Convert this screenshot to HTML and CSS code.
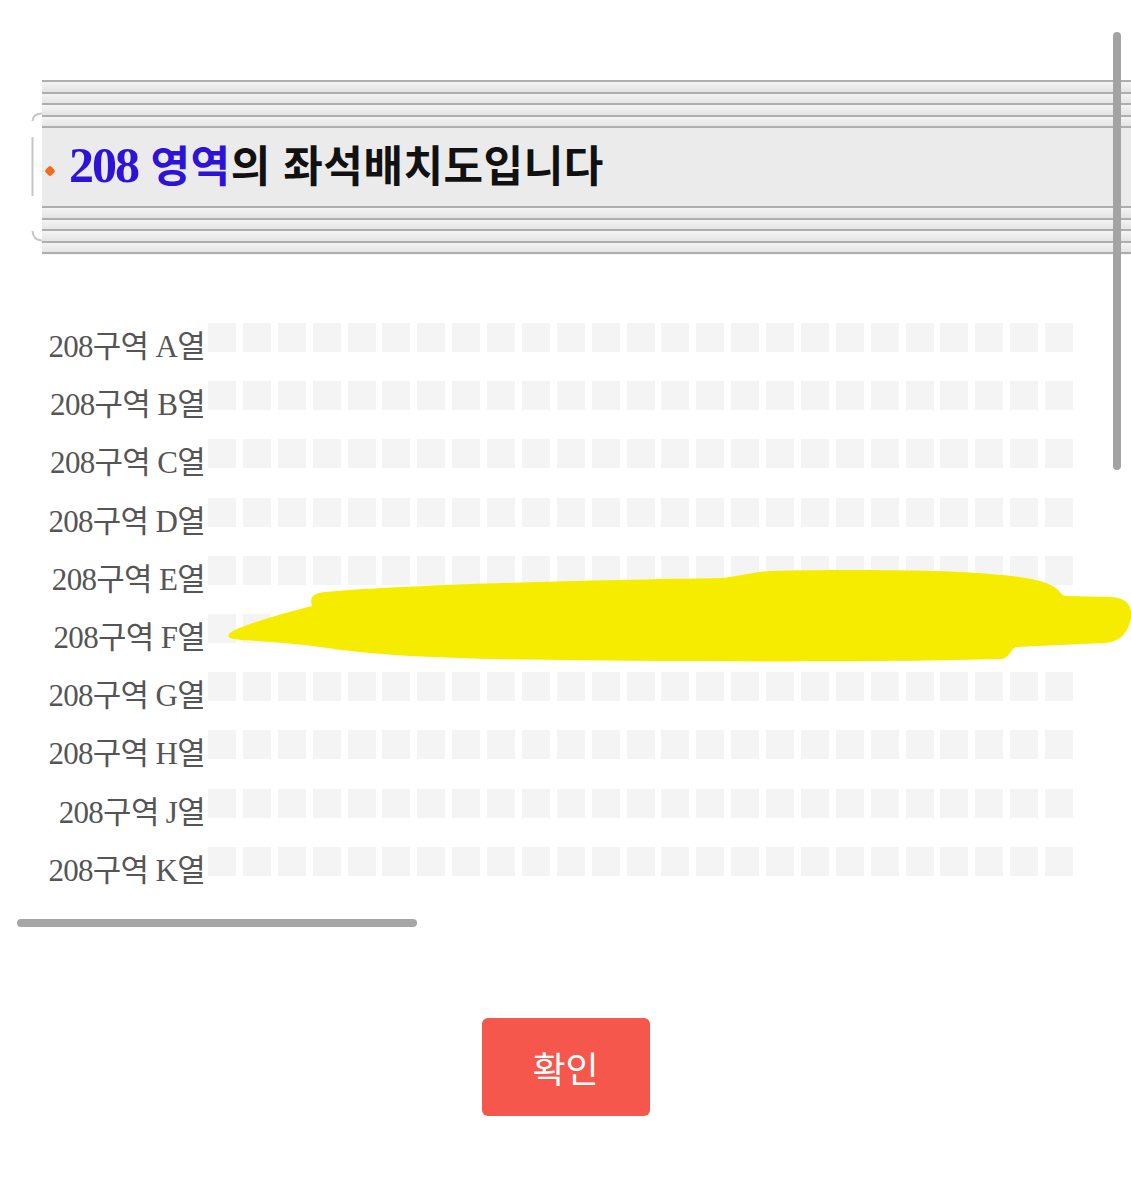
FILE: index.html
```html
<!DOCTYPE html>
<html lang="ko">
<head>
  <meta charset="UTF-8" />
  <meta name="viewport" content="width=device-width, initial-scale=1.0"/>
  <title>208 영역 좌석배치도</title>
  <link rel="stylesheet" href="styles.css">
</head>
<body>

  <div class="title-bar">
    <svg class="bracket" viewBox="0 0 11 175">
      <path d="M11 33.5 Q2 33.5 1.5 41 M1.5 57 V116 M1.5 151 Q2 160 11 160.5" fill="none" stroke="#c6c6c6" stroke-width="2"/>
    </svg>
    <div class="stripes">
      <div class="lines lines-top"></div>
      <div class="panel">
        <h2 class="title"><span class="dot"></span><span class="zone"><span class="num">208</span> 영역</span>의 좌석배치도입니다</h2>
      </div>
      <div class="lines lines-bottom"></div>
    </div>
  </div>

  <div class="seat-map">
    <div class="row"><div class="label">208구역 A열</div><div class="seats"></div></div>
    <div class="row"><div class="label">208구역 B열</div><div class="seats"></div></div>
    <div class="row"><div class="label">208구역 C열</div><div class="seats"></div></div>
    <div class="row"><div class="label">208구역 D열</div><div class="seats"></div></div>
    <div class="row"><div class="label">208구역 E열</div><div class="seats"></div></div>
    <div class="row"><div class="label">208구역 F열</div><div class="seats"></div></div>
    <div class="row"><div class="label">208구역 G열</div><div class="seats"></div></div>
    <div class="row"><div class="label">208구역 H열</div><div class="seats"></div></div>
    <div class="row"><div class="label">208구역 J열</div><div class="seats"></div></div>
    <div class="row"><div class="label">208구역 K열</div><div class="seats"></div></div>

    <!-- highlighter mark over row F -->
    <svg class="marker" viewBox="0 323 1131 560">
      <path fill="#f5ec00" d="M229 634 C232 628 280 614 312 606 C309 597 314 593 325 592 C420 584 600 580 722 578 C740 576 752 572 770 571 C850 569 950 570 990 574 C1030 577 1050 582 1058 590 C1062 594 1062 596 1068 596 L1112 597 C1128 598 1134 608 1130 622 C1126 636 1118 642 1104 643 L1016 647 C1010 650 1010 657 1002 659 C900 662 700 662 560 660 C450 659 380 656 320 647 C290 643 260 641 241 640 C232 639 226 638 229 634 Z"/>
    </svg>
  </div>

  <div class="hscroll"></div>

  <div class="actions">
    <button class="btn-ok">확인</button>
  </div>

  <div class="vscroll"></div>

  <script>
    // Fill every row with 25 empty seats
    document.querySelectorAll('.seats').forEach(row => {
      for (let i = 0; i < 25; i++) {
        const seat = document.createElement('div');
        seat.className = 'seat';
        row.appendChild(seat);
      }
    });
  </script>

</body>
</html>
```

FILE: styles.css
```css
body {
  margin: 0;
  background: #fff;
  font-family: "Noto Sans CJK KR", sans-serif;
  position: relative;
}
.title-bar {
  display: flex;
  margin: 80px 0 0 31px;
}
.bracket {
  flex: none;
  width: 11px;
  height: 175px;
}
.stripes {
  flex: 1;
}
.lines {
  height: 46.4px;
}
.lines-top {
  background: repeating-linear-gradient(to bottom, #aeaeae 0 2px, #f4f4f4 2px, #e4e4e4 11.6px);
}
.lines-bottom {
  background: repeating-linear-gradient(to bottom, #f4f4f4 0, #e4e4e4 9.6px, #aeaeae 9.6px 11.6px);
}
.panel {
  height: 70px;
  padding-bottom: 8px;
  background: #ebebeb;
  border-top: 2px solid #aeaeae;
  border-bottom: 2px solid #aeaeae;
  display: flex;
  align-items: center;
}
.title {
  margin: 0;
  font-size: 43px;
  font-weight: 700;
  letter-spacing: 0.5px;
  color: #111;
  white-space: nowrap;
}
.dot {
  display: inline-block;
  width: 8px;
  height: 8px;
  margin: 0 15px 0 4px;
  background: #f26b1d;
  border-radius: 2px;
  transform: rotate(45deg);
  vertical-align: middle;
}
.zone {
  color: #2d12d8;
}
.num {
  font-family: "Liberation Serif", serif;
  font-size: 50px;
  letter-spacing: -2px;
}
.seat-map {
  position: relative;
  margin-top: 68px;
  display: flex;
  flex-direction: column;
  gap: 29.2px;
}
.row {
  display: flex;
  align-items: flex-start;
  height: 29px;
}
.label {
  flex: none;
  width: 205px;
  text-align: right;
  font-family: "Liberation Serif", "Noto Sans CJK KR", serif;
  font-size: 31px;
  letter-spacing: -0.7px;
  line-height: 47px;
  color: #555;
  white-space: nowrap;
}
.seats {
  display: flex;
  gap: 6.875px;
  margin-left: 3px;
}
.seat {
  width: 28px;
  height: 29px;
  background: #f4f4f4;
}
.marker {
  position: absolute;
  left: 0;
  top: 0;
  width: 1131px;
  height: 560px;
  pointer-events: none;
}
.hscroll {
  width: 400px;
  height: 8px;
  margin: 43px 0 0 17px;
  border-radius: 4px;
  background: #a6a6a6;
}
.actions {
  display: flex;
  justify-content: center;
  margin-top: 91px;
}
.btn-ok {
  width: 168px;
  height: 98px;
  border: 0;
  border-radius: 6px;
  background: #f5574c;
  color: #fff;
  font-family: "Noto Sans CJK KR", sans-serif;
  font-size: 36px;
}
.vscroll {
  position: absolute;
  left: 1113px;
  top: 32px;
  width: 8px;
  height: 438px;
  border-radius: 4px;
  background: #a3a3a3;
}
```
